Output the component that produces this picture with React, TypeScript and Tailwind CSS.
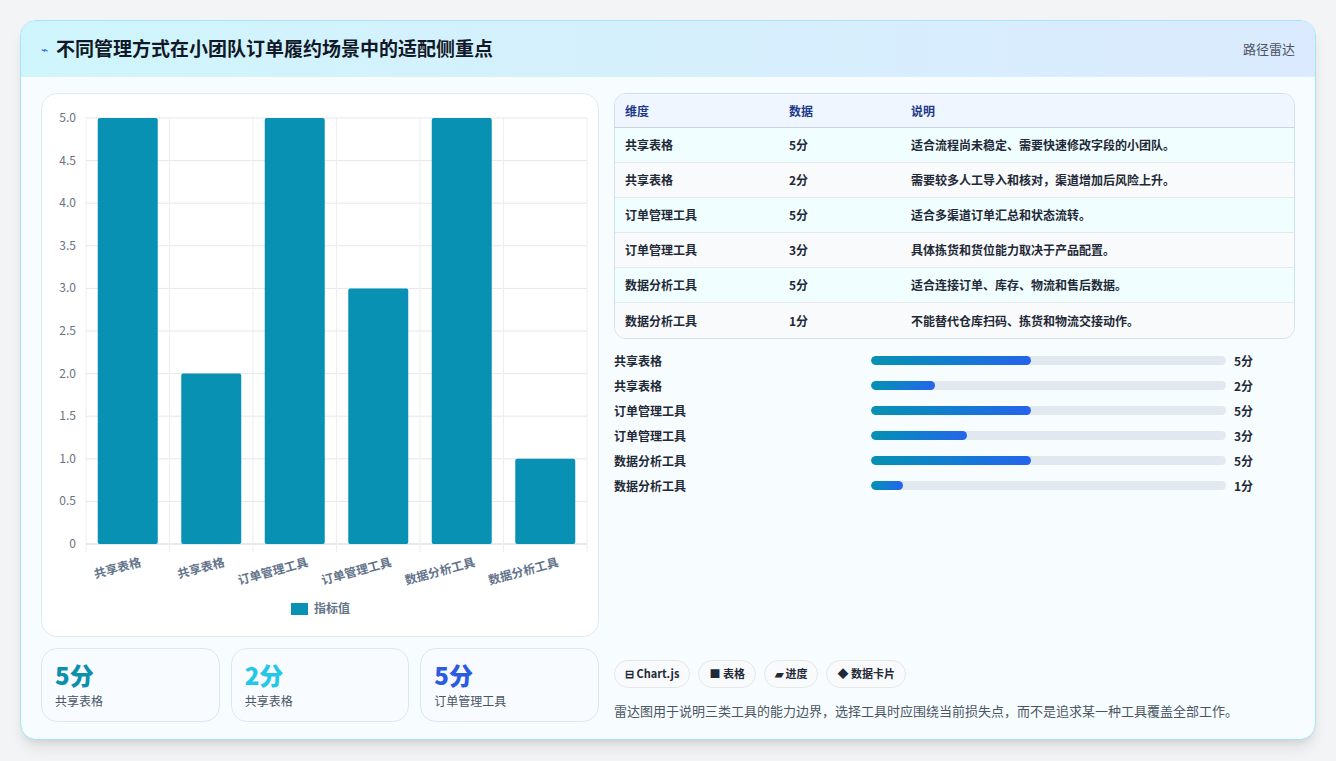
import React from 'react';

const rows = [
  { name: '共享表格', score: 5, note: '适合流程尚未稳定、需要快速修改字段的小团队。' },
  { name: '共享表格', score: 2, note: '需要较多人工导入和核对，渠道增加后风险上升。' },
  { name: '订单管理工具', score: 5, note: '适合多渠道订单汇总和状态流转。' },
  { name: '订单管理工具', score: 3, note: '具体拣货和货位能力取决于产品配置。' },
  { name: '数据分析工具', score: 5, note: '适合连接订单、库存、物流和售后数据。' },
  { name: '数据分析工具', score: 1, note: '不能替代仓库扫码、拣货和物流交接动作。' },
];

const font = { fontFamily: '"Noto Sans CJK SC", "Noto Sans", sans-serif' };

const Chart = () => {
  // plot area inside the card
  const left = 44;
  const right = 545;
  const top = 24;
  const bottom = 450;
  const step = (right - left) / 6;
  const yTicks = [0, 0.5, 1, 1.5, 2, 2.5, 3, 3.5, 4, 4.5, 5];
  const y = (v: number) => bottom - (v / 5) * (bottom - top);
  return (
    <svg width="558" height="544" className="block" style={font}>
      {yTicks.map((t) => (
        <g key={t}>
          <line x1={left} x2={right} y1={y(t)} y2={y(t)} stroke={t === 0 ? '#cbd5e1' : '#e5e7eb'} />
          <text x={left - 10} y={y(t) + 4} textAnchor="end" fontSize="12" fill="#6b7280">
            {t === 0 ? '0' : t.toFixed(1)}
          </text>
        </g>
      ))}
      {Array.from({ length: 7 }).map((_, i) => (
        <line key={i} x1={left + i * step} x2={left + i * step} y1={top} y2={bottom + 8} stroke="#eceef2" />
      ))}
      {rows.map((r, i) => {
        const cx = left + step * i + step / 2;
        return (
          <g key={i}>
            <rect x={cx - 30} y={y(r.score)} width="60" height={bottom - y(r.score)} rx="2" fill="#0891b2" />
            <text
              x={cx + 14}
              y={bottom + 22}
              textAnchor="end"
              fontSize="12"
              fontWeight="700"
              fill="#64748b"
              transform={`rotate(-15 ${cx + 14} ${bottom + 22})`}
            >
              {r.name}
            </text>
          </g>
        );
      })}
      <rect x="249" y="509" width="17" height="12" fill="#0891b2" />
      <text x="272" y="519" fontSize="12" fontWeight="700" fill="#64748b">指标值</text>
    </svg>
  );
};

const statColors = ['text-[#0e8fad]', 'text-[#22c8e5]', 'text-[#2b5be0]'];

export default function App() {
  return (
    <div className="min-h-[761px] bg-[#f3f4f6] p-5" style={font}>
      <div className="rounded-2xl border border-[#a5e6f0] bg-[#f7fdff] overflow-hidden shadow-lg h-[720px] flex flex-col">
        <div className="h-14 flex items-center justify-between px-5 bg-gradient-to-r from-[#cff5fc] to-[#dbeafe] border-b border-[#d6f1f7]">
          <div className="flex items-center gap-2">
            <span className="text-[#2563eb] text-xs">⌁</span>
            <h1 className="text-[19px] font-bold text-[#111827]">不同管理方式在小团队订单履约场景中的适配侧重点</h1>
          </div>
          <span className="text-[13px] text-[#4b5563]">路径雷达</span>
        </div>
        <div className="flex gap-[15px] px-5 pt-4 flex-1">
          <div className="w-[558px] flex flex-col gap-[11px]">
            <div className="h-[544px] rounded-2xl border border-[#e2e8f0] bg-white">
              <Chart />
            </div>
            <div className="flex gap-[11px]">
              {rows.slice(0, 3).map((r, i) => (
                <div key={i} className="flex-1 h-[74px] rounded-2xl border border-[#dbe7f5] bg-[#f8fbff] px-[13px] pt-[10px]">
                  <div className={`text-[24px] font-extrabold leading-8 ${statColors[i]}`}>{r.score}分</div>
                  <div className="text-xs text-[#4b5563] mt-0.5">{r.name}</div>
                </div>
              ))}
            </div>
          </div>
          <div className="flex-1 flex flex-col">
            <div className="rounded-xl border border-[#cfe0ec] overflow-hidden text-xs">
              <div className="flex h-[34px] items-center bg-[#eff6ff] border-b border-[#cbd5e1] font-bold text-[#1e3a8a]">
                <div className="w-[174px] pl-[10px]">维度</div>
                <div className="w-[122px]">数据</div>
                <div>说明</div>
              </div>
              {rows.map((r, i) => (
                <div
                  key={i}
                  className={`flex h-[35px] items-center font-semibold text-[#1f2937] ${i < 5 ? 'border-b border-[#e5e7eb]' : ''} ${i % 2 === 0 ? 'bg-[#f0feff]' : 'bg-[#f9fafb]'}`}
                >
                  <div className="w-[174px] pl-[10px]">{r.name}</div>
                  <div className="w-[122px]">{r.score}分</div>
                  <div>{r.note}</div>
                </div>
              ))}
            </div>
            <div className="mt-[9px] flex flex-col">
              {rows.map((r, i) => (
                <div key={i} className="flex items-center h-[25px] text-xs font-semibold text-[#1f2937]">
                  <div className="w-[257px]">{r.name}</div>
                  <div className="w-[355px] h-[9px] rounded-full bg-[#e2e8f0] overflow-hidden">
                    <div
                      className="h-full rounded-full bg-gradient-to-r from-[#0891b2] to-[#2563eb]"
                      style={{ width: `${r.score * 9}%` }}
                    />
                  </div>
                  <div className="ml-2">{r.score}分</div>
                </div>
              ))}
            </div>
            <div className="mt-auto mb-[19px]">
              <div className="flex gap-2 text-[11px] font-semibold text-[#1f2937]">
                {['⊟ Chart.js', '■ 表格', '▰ 进度', '◆ 数据卡片'].map((t) => (
                  <span key={t} className="h-[28px] px-[10px] flex items-center rounded-full border border-[#e5e7eb] bg-[#f8fafc]">
                    {t}
                  </span>
                ))}
              </div>
              <p className="mt-[13px] text-[13px] text-[#4b5563]">
                雷达图用于说明三类工具的能力边界，选择工具时应围绕当前损失点，而不是追求某一种工具覆盖全部工作。
              </p>
            </div>
          </div>
        </div>
      </div>
    </div>
  );
}
